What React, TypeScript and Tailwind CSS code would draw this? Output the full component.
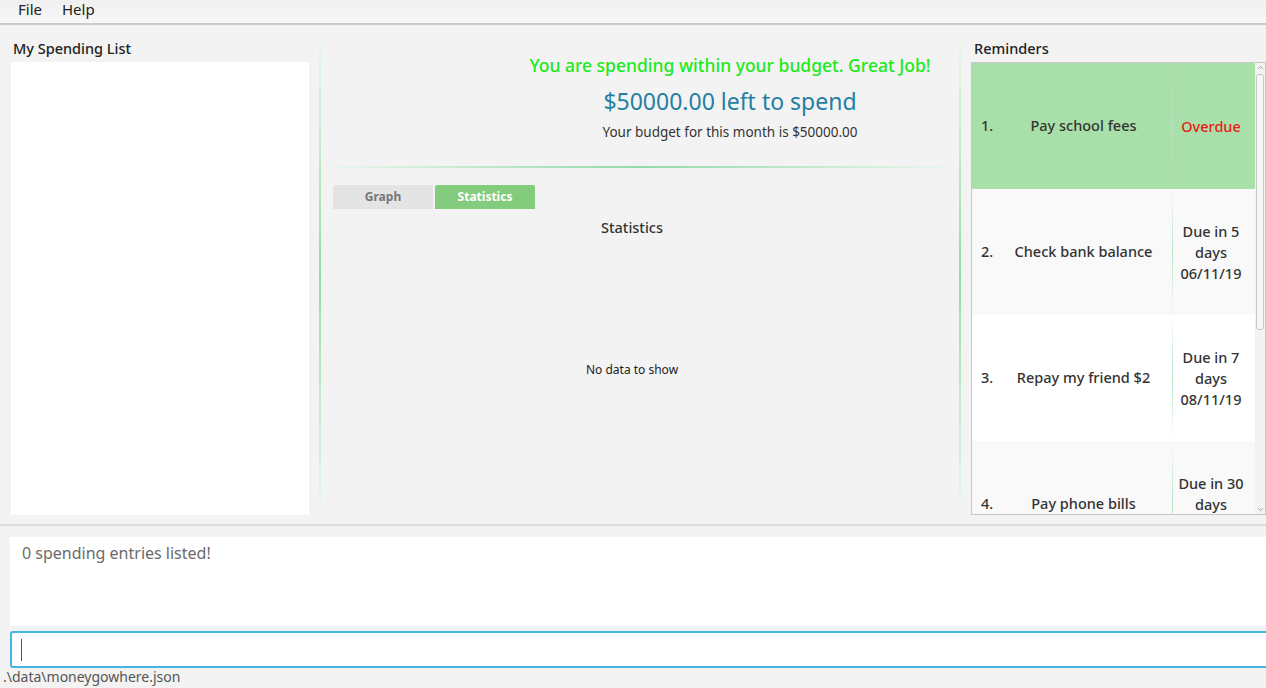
import { ChevronUp, ChevronDown } from "lucide-react";

type Reminder = {
  id: number;
  text: string;
  due: string[];
  overdue?: boolean;
  bg: string;
};

const reminders: Reminder[] = [
  { id: 1, text: "Pay school fees", due: ["Overdue"], overdue: true, bg: "bg-[#a9dfa8]" },
  { id: 2, text: "Check bank balance", due: ["Due in 5", "days", "06/11/19"], bg: "bg-[#f9f9f9]" },
  { id: 3, text: "Repay my friend $2", due: ["Due in 7", "days", "08/11/19"], bg: "bg-white" },
  { id: 4, text: "Pay phone bills", due: ["Due in 30", "days", ""], bg: "bg-[#f9f9f9]" },
];

const VSep = () => (
  <div className="w-[2px] shrink-0 bg-linear-to-b from-[#eef8f1] via-[#93dbab] to-[#eef8f1]" />
);

const ReminderRow = ({ r }: { r: Reminder }) => (
  <div className={`flex h-[126px] shrink-0 ${r.bg}`}>
    <div className="flex w-[200px] items-center">
      <span className="w-[23px] pl-[9px] font-medium">{r.id}.</span>
      <span className="flex-1 text-center font-medium">{r.text}</span>
    </div>
    <div className="w-px bg-linear-to-b from-transparent via-[#b5e5c4] to-transparent" />
    <div className="flex flex-1 flex-col items-center justify-center pr-[6px] leading-[21px]">
      {r.due.map((line, i) => (
        <span
          key={i}
          className={r.overdue ? "h-[21px] font-medium text-[#ea1a1a]" : "h-[21px] font-medium"}
        >
          {line}
        </span>
      ))}
    </div>
  </div>
);

export default function App() {
  return (
    <div className="flex h-[688px] w-[1266px] flex-col overflow-hidden bg-[#f3f3f3] font-['Noto_Sans',sans-serif] text-[#333]">
      {/* menu bar */}
      <div className="flex h-[25px] shrink-0 items-start gap-[20px] border-b-2 border-[#c9c9c9] bg-linear-to-b from-[#f0f0f0] to-[#f7f7f7] pl-[18px] text-[15px] leading-[18px] text-[#222]">
        <span>File</span>
        <span>Help</span>
      </div>

      {/* main area */}
      <div className="flex h-[501px] shrink-0 border-b-2 border-[#dcdcdc]">
        <div className="flex w-[319px] shrink-0 flex-col pl-[11px] pr-[10px] pt-[13px] pb-[9px]">
          <div className="h-[24px] pl-[2px] text-[14.5px] font-medium leading-[20px] text-[#222]">
            My Spending List
          </div>
          <div className="flex-1 bg-white" />
        </div>
        <VSep />

        <div className="flex w-[638px] shrink-0 flex-col">
          <div className="flex h-[141px] flex-col items-center pl-[180px] pt-[27px]">
            <div className="text-[17.5px] font-medium leading-[26px] text-[#1bea1b]">
              You are spending within your budget. Great Job!
            </div>
            <div className="mt-[8px] text-[23px] leading-[30px] text-[#247fa3]">
              $50000.00 left to spend
            </div>
            <div className="mt-[6px] text-[13.5px] leading-[20px] text-[#333]">
              Your budget for this month is $50000.00
            </div>
          </div>
          <div className="mx-[8px] h-[2px] bg-linear-to-r from-[#eaf7ee] via-[#92d9aa] to-[#eaf7ee]" />
          <div className="flex flex-1 flex-col pl-[12px] pr-[28px] pt-[17px]">
            <div className="flex gap-[2px]">
              <div className="flex h-[24px] w-[100px] items-center justify-center rounded-t-[2px] bg-[#e4e4e4] text-[12px] font-bold text-[#777]">
                Graph
              </div>
              <div className="flex h-[24px] w-[100px] items-center justify-center rounded-t-[2px] bg-[#83cc7e] text-[12px] font-bold text-white">
                Statistics
              </div>
            </div>
            <div className="mt-[8px] text-center text-[14.5px] font-medium text-[#333]">
              Statistics
            </div>
            <div className="flex flex-1 items-center justify-center pb-[22px] text-[12px] text-[#222]">
              No data to show
            </div>
          </div>
        </div>
        <VSep />

        <div className="flex flex-1 flex-col pl-[10px] pt-[13px] pb-[9px]">
          <div className="h-[24px] pl-[3px] text-[14.5px] font-medium leading-[20px] text-[#222]">
            Reminders
          </div>
          <div className="flex min-h-0 flex-1 border border-[#c8c8c8] bg-white text-[14.5px] text-[#333]">
            <div className="flex min-w-0 flex-1 flex-col overflow-hidden">
              {reminders.map((r) => (
                <ReminderRow key={r.id} r={r} />
              ))}
            </div>
            <div className="flex w-[10px] shrink-0 flex-col items-center bg-[#f3f3f3]">
              <ChevronUp className="h-[9px] w-[9px] text-[#888]" strokeWidth={2} />
              <div className="mt-[2px] h-[256px] w-[8px] rounded-[3px] border border-[#c9c9c9] bg-[#f7f7f7]" />
              <div className="flex-1" />
              <ChevronDown className="h-[9px] w-[9px] text-[#888]" strokeWidth={2} />
            </div>
          </div>
        </div>
      </div>

      {/* result display */}
      <div className="flex flex-1 flex-col pl-[10px] pt-[11px]">
        <div className="h-[89px] bg-white pl-[12px] pt-[4px] text-[16px] text-[#6b6b6b]">
          0 spending entries listed!
        </div>
        <div className="mt-[5px] flex h-[37px] items-center rounded-l-[3px] border-2 border-r-0 border-[#46b3e0] bg-white pl-[9px]">
          <div className="h-[22px] w-px bg-[#555]" />
        </div>
      </div>

      {/* status bar */}
      <div className="h-[20px] shrink-0 pl-[3px] text-[14px] leading-[18px] text-[#555]">
        .\data\moneygowhere.json
      </div>
    </div>
  );
}
